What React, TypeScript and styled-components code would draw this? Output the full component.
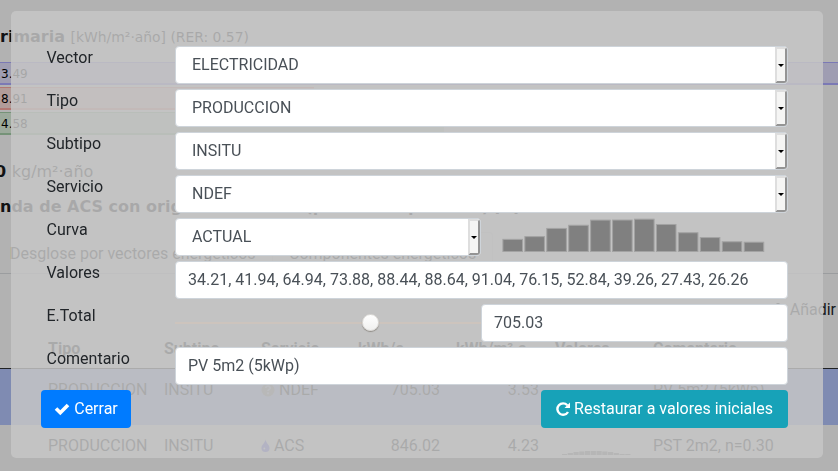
import React from "react";
import styled, { createGlobalStyle } from "styled-components";

const Global = createGlobalStyle`
  *, *::before, *::after { box-sizing: border-box; }
  html, body { margin: 0; height: 100%; overflow: hidden; }
  body { background: #b2b2b2; font: 16px/24px Roboto, "Liberation Sans", sans-serif; color: #17191b; }
`;

const Page = styled.main`
  width: 838px;
  height: 471px;
  overflow: hidden;
  white-space: nowrap;
`;

const Heading = styled.h2<{ $top: number; $shift?: number }>`
  margin: 0 0 0 ${(p) => p.$shift ?? 0}px;
  padding-top: ${(p) => p.$top}px;
  font: 700 16px/20px "DejaVu Sans", sans-serif;
  color: #111213;
`;

const Unit = styled.span<{ $size: number }>`
  font-weight: 400;
  font-size: ${(p) => p.$size}px;
  color: #111213;
`;

const Bars = styled.div`
  display: flex;
  flex-direction: column;
  gap: 2px;
  margin-top: 15px;
`;

const Bar = styled.div<{ $w: number; $fill: string; $line: string }>`
  width: ${(p) => p.$w}px;
  height: 23px;
  padding-left: 1px;
  background: ${(p) => p.$fill};
  border: solid ${(p) => p.$line};
  border-width: 1px 0 2px;
  font: 12px/22px "DejaVu Sans", sans-serif;
  color: #000;
`;

const Tabs = styled.nav`
  display: flex;
  margin: 15px 0 0 -1px;
  height: 42px;
  border-bottom: 1px solid #9b9d9f;
`;

const Tab = styled.span<{ $w: number; $active?: boolean }>`
  width: ${(p) => p.$w}px;
  padding: 9px 0 0 ${(p) => (p.$active ? 16 : 10)}px;
  border: 1px solid ${(p) => (p.$active ? "#a6a8aa" : "transparent")};
  border-bottom: 0;
  border-radius: 4px 4px 0 0;
`;

const AddLink = styled.div`
  display: flex;
  align-items: center;
  justify-content: flex-end;
  gap: 7px;
  margin: 24px 2px 0 0;
`;

const Grid = styled.div<{ $head?: boolean; $tint?: boolean }>`
  display: grid;
  grid-template-columns: 116px 97px 84px 95px 99px 114px 1fr;
  height: ${(p) => (p.$head ? 47 : 56)}px;
  padding: ${(p) => (p.$head ? 15 : 9)}px 0 0 48px;
  font-weight: ${(p) => (p.$head ? 700 : 400)};
  background: ${(p) => (p.$tint ? "#7f8bb2" : "transparent")};
  border-bottom: ${(p) => (p.$head ? "1px solid #202224" : "0")};
`;

const HeadCell = styled.span<{ $indent: number }>`
  padding-left: ${(p) => p.$indent}px;
`;

const Num = styled.span`
  text-align: right;
`;

const WithIcon = styled.span`
  display: flex;
  gap: 4px;
  svg { margin-top: 5px; }
`;

const Spark = styled.svg`
  margin: 13px 0 0 22px;
`;

const Dialog = styled.section`
  position: fixed;
  top: 11px;
  left: 11px;
  width: 812px;
  height: 447px;
  padding: 35px 35px 0 30px;
  background: rgba(198, 198, 198, 0.84);
  border-radius: 5px;
  color: #212529;
`;

const Row = styled.div`
  display: flex;
  height: 43px;
`;

const Label = styled.label`
  width: 134px;
  padding-left: 5.5px;
  line-height: 23px;
`;

const Field = styled.div<{ $w?: number; $inset?: number }>`
  display: flex;
  justify-content: space-between;
  width: ${(p) => p.$w ?? 613}px;
  height: 38px;
  padding-left: ${(p) => p.$inset ?? 12}px;
  line-height: 36px;
  color: #495057;
  background: #fff;
  border: 1px solid #ced4da;
  border-radius: 4px;
`;

const Arrow = styled.span`
  display: flex;
  align-items: center;
  justify-content: center;
  width: 12px;
  height: 36px;
  background: #f5f5f4;
  border: 2px solid;
  border-color: #dedede #949494 #949494 #dedede;
  border-radius: 0 3px 3px 0;
  &::after {
    content: "";
    flex: none;
    border: 3px solid transparent;
    border-top-color: #000;
    border-bottom: 0;
  }
`;

const Chart = styled.svg`
  margin-left: 21px;
`;

const Slider = styled.div`
  display: flex;
  align-items: center;
  width: 306px;
  height: 38px;
  background: linear-gradient(#cdc4bd, #cdc4bd) 0 18px / 100% 2px no-repeat;
`;

const Knob = styled.span`
  width: 17px;
  height: 17px;
  margin: -1px 0 0 186.5px;
  border-radius: 50%;
  background: linear-gradient(#fff, #f0f0ef);
  border: 1px solid #dcdad7;
  box-shadow: 0 1px 1px #8f8b85;
`;

const Footer = styled.footer`
  display: flex;
  justify-content: space-between;
`;

const Button = styled.button<{ $bg: string; $w: number }>`
  display: flex;
  align-items: center;
  justify-content: center;
  gap: 4px;
  width: ${(p) => p.$w}px;
  height: 38px;
  padding: 0;
  border: 0;
  border-radius: 4px;
  background: ${(p) => p.$bg};
  color: #fff;
  font: 16px/24px Roboto, sans-serif;
`;

const selects = [
  ["Vector", "ELECTRICIDAD"],
  ["Tipo", "PRODUCCION"],
  ["Subtipo", "INSITU"],
  ["Servicio", "NDEF"],
];

const values = [34.21, 41.94, 64.94, 73.88, 88.44, 88.64, 91.04, 76.15, 52.84, 39.26, 27.43, 26.26];
const sparkHeights = [1, 2, 3, 3.5, 4, 4, 4, 3.5, 3, 2, 1, 1];

export default function App() {
  return (
    <>
      <Global />
      <Page>
        <Heading $top={27}>
          rimaria <Unit $size={13.9}>[kWh/m²·año] (RER: 0.57)</Unit>
        </Heading>
        <Bars>
          <Bar $w={838} $fill="#9f9db2" $line="#7b79b5">3.49</Bar>
          <Bar $w={314} $fill="#b29c99" $line="#b27873">8.91</Bar>
          <Bar $w={444} $fill="#9caa9c" $line="#759378">4.58</Bar>
        </Bars>
        <Heading $top={27} $shift={-5}>
          0 <Unit $size={16}>kg/m²·año</Unit>
        </Heading>
        <Heading $top={15}>
          nda de ACS con origen renovable (perímetro próximo) <Unit $size={13.9}>[%]</Unit>
        </Heading>
        <Tabs>
          <Tab $w={273}>Desglose por vectores energéticos</Tab>
          <Tab $w={221} $active>Componentes energéticos</Tab>
        </Tabs>
        <AddLink>
          <svg width="10" height="14" viewBox="0 0 10 14"><path d="M5 0v12M0 6h10" stroke="#17191b" strokeWidth="3" /></svg>
          Añadir
        </AddLink>
        <Grid $head>
          <span>Tipo</span><span>Subtipo</span><span>Servicio</span>
          <HeadCell $indent={13}>kWh/a</HeadCell>
          <HeadCell $indent={16}>kWh/m²·a</HeadCell>
          <HeadCell $indent={16}>Valores</HeadCell>
          <span>Comentario</span>
        </Grid>
        <Grid $tint>
          <span>PRODUCCION</span><span>INSITU</span>
          <WithIcon>
            <svg width="14" height="14" viewBox="0 0 14 14"><circle cx="7" cy="7" r="6.5" fill="#716f70" /><path d="M4.8 5c.2-3 4.8-2 4.3.3C8.8 6.4 7 6.5 7 8M7 9.3v2" fill="none" stroke="#8b91aa" strokeWidth="1.8" /></svg>
            NDEF
          </WithIcon>
          <Num>705.03</Num><Num>3.53</Num><span />
          <span>PV 5m2 (5kWp)</span>
        </Grid>
        <Grid>
          <span>PRODUCCION</span><span>INSITU</span>
          <WithIcon>
            <svg width="9" height="14" viewBox="0 0 10 14"><path d="M5 0C4 4 .5 6 .5 9.300a4.500 4.500 0 0 0 9 0C9.500 6 6 4 5 0z" fill="#5353b2" /><circle cx="3.700" cy="9.800" r="1" fill="#b2b2b2" /></svg>
            ACS
          </WithIcon>
          <Num>846.02</Num><Num>4.23</Num>
          <Spark width="70" height="10">
            {sparkHeights.map((h, i) => (
              <rect key={i} x={1 + i * 5.75} y={8 - h} width="5.2" height={h} fill="#666" />
            ))}
          </Spark>
          <span>PST 2m2, n=0.30</span>
        </Grid>
      </Page>

      <Dialog>
        {selects.map(([label, value]) => (
          <Row key={label}>
            <Label>{label}</Label>
            <Field $inset={16}>{value}<Arrow /></Field>
          </Row>
        ))}
        <Row>
          <Label>Curva</Label>
          <Field $w={306} $inset={16}>ACTUAL<Arrow /></Field>
          <Chart width="264" height="38">
            {values.map((v, i) => (
              <rect key={i} x={0.9 + i * 21.93} y={33.5 - v * 0.355} width="19.6" height={v * 0.355} fill="#808080" stroke="#a3a3a3" />
            ))}
          </Chart>
        </Row>
        <Row>
          <Label>Valores</Label>
          <Field>{values.map((v) => v.toFixed(2)).join(", ")}</Field>
        </Row>
        <Row>
          <Label>E.Total</Label>
          <Slider><Knob /></Slider>
          <Field $w={307}>705.03</Field>
        </Row>
        <Row>
          <Label>Comentario</Label>
          <Field>PV 5m2 (5kWp)</Field>
        </Row>
        <Footer>
          <Button $bg="#007bff" $w={90}>
            <svg width="16" height="14" viewBox="0 0 16 14"><path d="M2 6.500l4.300 4.300L14 3" fill="none" stroke="#fff" strokeWidth="3.600" /></svg>
            Cerrar
          </Button>
          <Button $bg="#17a2b8" $w={247}>
            <svg width="14" height="14" viewBox="0 0 14 14"><path d="M11.300 3.200A5.700 5.700 0 1 0 12 10" fill="none" stroke="#fff" strokeWidth="2.400" /><path d="M14 .5V6H8.500z" fill="#fff" /></svg>
            Restaurar a valores iniciales
          </Button>
        </Footer>
      </Dialog>
    </>
  );
}
